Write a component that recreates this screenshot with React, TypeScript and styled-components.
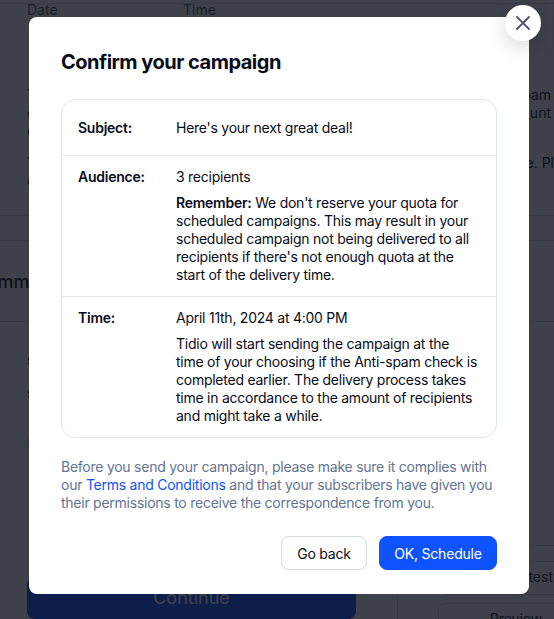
import * as React from "react";
import styled, { createGlobalStyle } from "styled-components";

const FONT = `"Inter", "Liberation Sans", sans-serif`;

const GlobalStyle = createGlobalStyle`
  html, body {
    margin: 0;
    padding: 0;
    background: #fff;
    font-family: ${FONT};
  }
  * { box-sizing: border-box; }
`;

const Page = styled.div`
  position: relative;
  width: 554px;
  height: 619px;
  overflow: hidden;
  background: #fff;
`;

const PageInner = styled.div`
  display: flex;
  flex-direction: column;
  height: 100%;
  padding-top: 3px;
  color: #080c1a;
  font-size: 14px;
  line-height: 18px;
`;

const FieldRow = styled.div`
  display: flex;
  height: 83px;
  padding-left: 27px;
  border-top: 1px solid #d3dbe5;
  color: #4c5772;
`;

const FieldLabel = styled.span`
  width: 156px;
  line-height: 12px;
`;

const PageParagraph = styled.div<{ $gap: number }>`
  padding-left: 27px;
  margin-bottom: ${props => props.$gap}px;
`;

const PageLine = styled.div<{ $bleed?: boolean }>`
  display: flex;
  justify-content: space-between;
  margin-right: ${props => (props.$bleed ? "0" : "3px")};
`;

const SectionRule = styled.div<{ $gap: number }>`
  border-top: 1px solid #d3dbe5;
  height: ${props => props.$gap}px;
`;

const SectionTitle = styled.div`
  margin: 0 0 26px -25px;
  font-size: 18px;
  line-height: 26px;
  font-weight: 500;
  white-space: nowrap;
`;

const PageOption = styled.div`
  margin: 0 0 15px 27px;
`;

const PageNotice = styled.div`
  width: 300px;
  height: 10px;
  margin: 21px 0 0 27px;
  background: #f5dca0;
`;

const PageBottom = styled.div`
  margin-top: auto;
  display: flex;
  align-items: flex-end;
  height: 74px;
`;

const ContinueButton = styled.div`
  width: 329px;
  height: 42px;
  margin: 0 41px 0 27px;
  border-radius: 8px;
  background: #0f53ff;
  color: #fff;
  font-size: 18px;
  line-height: 42px;
  text-align: center;
`;

const SidePanel = styled.div`
  flex: 1;
  height: 100%;
  padding-left: 40px;
  border-left: 1px solid #d3dbe5;
  border-top: 1px solid #d3dbe5;
`;

const SideButton = styled.div<{ $top: number; $trailing?: boolean }>`
  height: 34px;
  margin-top: ${props => props.$top}px;
  margin-right: -40px;
  padding: 6px ${props => (props.$trailing ? "40px" : "0")} 0 0;
  border: 1px solid #d3dbe5;
  border-radius: 8px;
  text-align: ${props => (props.$trailing ? "right" : "center")};
  white-space: nowrap;
`;

const Backdrop = styled.div`
  position: absolute;
  inset: 0;
  background: rgba(14, 18, 29, 0.8);
`;

const Modal = styled.div`
  position: absolute;
  left: 29px;
  top: 17px;
  width: 500px;
  height: 577px;
  padding: 32px 32px 24px;
  background: #fff;
  border-radius: 8px;
  display: flex;
  flex-direction: column;
`;

const CloseButton = styled.button`
  position: absolute;
  top: -12px;
  right: -12px;
  width: 36px;
  height: 36px;
  border: 0;
  padding: 0;
  border-radius: 50%;
  background: #fff;
  color: #4c5772;
  display: flex;
  align-items: center;
  justify-content: center;
  box-shadow: 0 6px 20px rgba(8, 12, 26, 0.16);
`;

const Title = styled.h2`
  margin: 0 0 24px;
  font-size: 20px;
  line-height: 26px;
  font-weight: 700;
  letter-spacing: -0.5px;
  color: #080c1a;
`;

const Summary = styled.div`
  border: 1px solid #e2e8ef;
  border-radius: 14px;
`;

const Row = styled.div<{ $single?: boolean }>`
  display: flex;
  align-items: ${props => (props.$single ? "center" : "flex-start")};
  min-height: ${props => (props.$single ? "55px" : "0")};
  padding: 12px 16px;
  font-size: 14px;
  line-height: 18px;
  letter-spacing: -0.25px;
  color: #080c1a;
  & + & {
    border-top: 1px solid #e2e8ef;
  }
`;

const RowLabel = styled.div`
  width: 98px;
  flex-shrink: 0;
  font-weight: 600;
`;

const RowValue = styled.div`
  flex: 1;
`;

const Note = styled.p`
  margin: 8px 0 0;
  white-space: nowrap;
  b {
    font-weight: 600;
  }
`;

const Legal = styled.p`
  margin: 20px 0 0;
  font-size: 14px;
  line-height: 18px;
  letter-spacing: -0.25px;
  white-space: nowrap;
  color: #647491;
  a {
    color: #0f53ff;
    text-decoration: none;
  }
`;

const Footer = styled.div`
  margin-top: auto;
  display: flex;
  justify-content: flex-end;
  gap: 12px;
`;

const Button = styled.button<{ $primary?: boolean }>`
  height: 34px;
  width: ${props => (props.$primary ? "118px" : "86px")};
  padding: 0;
  border-radius: 8px;
  font-family: ${FONT};
  font-size: 14px;
  letter-spacing: -0.2px;
  border: 1px solid ${props => (props.$primary ? "#0f53ff" : "#d3dbe5")};
  background: ${props => (props.$primary ? "#0f53ff" : "#fff")};
  color: ${props => (props.$primary ? "#fff" : "#080c1a")};
`;

export default function App() {
  return (
    <>
      <GlobalStyle />
      <Page>
        <PageInner>
          <FieldRow>
            <FieldLabel>Date</FieldLabel>
            <FieldLabel>Time</FieldLabel>
          </FieldRow>
          <PageParagraph $gap={14}>
            <PageLine>
              <span>T</span>
              <span>pam</span>
            </PageLine>
            <PageLine>
              <span>c</span>
              <span>unt</span>
            </PageLine>
            <PageLine>
              <span>c</span>
            </PageLine>
          </PageParagraph>
          <PageParagraph $gap={25}>
            <PageLine $bleed>
              <span>T</span>
              <span>e. Pl</span>
            </PageLine>
            <PageLine>
              <span>c</span>
            </PageLine>
          </PageParagraph>
          <SectionRule $gap={25} />
          <SectionRule $gap={29} />
          <SectionTitle>Summary</SectionTitle>
          <SectionRule $gap={30} />
          <PageOption>s</PageOption>
          <PageOption>s</PageOption>
          <PageNotice />
          <PageBottom>
            <ContinueButton>Continue</ContinueButton>
            <SidePanel>
              <SideButton $top={15} $trailing>Send test</SideButton>
              <SideButton $top={8}>Preview</SideButton>
            </SidePanel>
          </PageBottom>
        </PageInner>
        <Backdrop />
        <Modal>
          <CloseButton aria-label="Close">
            <svg width="20" height="20" viewBox="0 0 20 20" fill="none">
              <path d="M4 4L16 16M16 4L4 16" stroke="currentColor" strokeWidth="1.8" strokeLinecap="round" />
            </svg>
          </CloseButton>
          <Title>Confirm your campaign</Title>
          <Summary>
            <Row $single>
              <RowLabel>Subject:</RowLabel>
              <RowValue>Here's your next great deal!</RowValue>
            </Row>
            <Row>
              <RowLabel>Audience:</RowLabel>
              <RowValue>
                3 recipients
                <Note>
                  <b>Remember:</b> We don't reserve your quota for
                  <br />
                  scheduled campaigns. This may result in your
                  <br />
                  scheduled campaign not being delivered to all
                  <br />
                  recipients if there's not enough quota at the
                  <br />
                  start of the delivery time.
                </Note>
              </RowValue>
            </Row>
            <Row>
              <RowLabel>Time:</RowLabel>
              <RowValue>
                April 11th, 2024 at 4:00 PM
                <Note>
                  Tidio will start sending the campaign at the
                  <br />
                  time of your choosing if the Anti-spam check is
                  <br />
                  completed earlier. The delivery process takes
                  <br />
                  time in accordance to the amount of recipients
                  <br />
                  and might take a while.
                </Note>
              </RowValue>
            </Row>
          </Summary>
          <Legal>
            Before you send your campaign, please make sure it complies with
            <br />
            our <a href="#">Terms and Conditions</a> and that your subscribers have given you
            <br />
            their permissions to receive the correspondence from you.
          </Legal>
          <Footer>
            <Button>Go back</Button>
            <Button $primary>OK, Schedule</Button>
          </Footer>
        </Modal>
      </Page>
    </>
  );
}
